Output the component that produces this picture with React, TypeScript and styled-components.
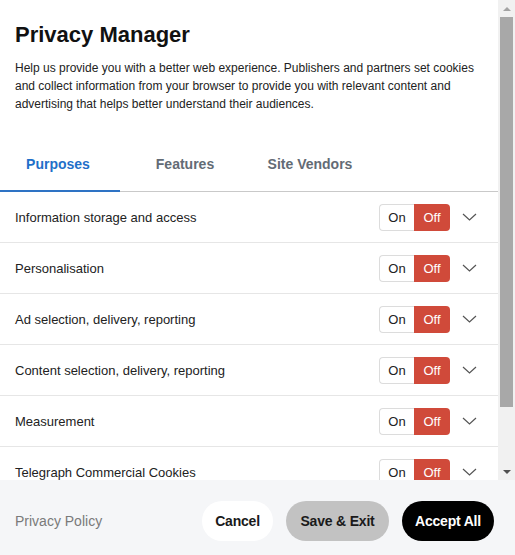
import React from "react";
import styled, { createGlobalStyle } from "styled-components";

const Global = createGlobalStyle`
  html, body { margin: 0; padding: 0; background: #fff; }
  body { font-family: "Liberation Sans", Arial, sans-serif; }
  * { box-sizing: border-box; }
`;

const Frame = styled.div`
  width: 515px;
  height: 555px;
  display: flex;
  flex-direction: column;
  overflow: hidden;
  background: #fff;
`;

const Body = styled.div`
  height: 480px;
  display: flex;
  flex-direction: row;
`;

const Content = styled.div`
  flex: 1;
  overflow: hidden;
`;

const Header = styled.div`
  padding: 22px 15px 0 15px;
`;

const Title = styled.h1`
  margin: 0;
  font-size: 22px;
  line-height: 26px;
  font-weight: 700;
  color: #111;
`;

const Intro = styled.p`
  margin: 11px 0 0 0;
  font-size: 12px;
  line-height: 18px;
  color: #222;
`;

const TabList = styled.div`
  margin-top: 28px;
  display: flex;
  gap: 5px;
  border-bottom: 1px solid #c9c9c9;
`;

const Tab = styled.div<{ $active?: boolean }>`
  width: 120px;
  text-align: center;
  padding: 15px 0 18px 0;
  font-size: 14px;
  line-height: 16px;
  font-weight: 700;
  color: ${(p) => (p.$active ? "#1f6fc9" : "#636b75")};
  border-bottom: 2px solid ${(p) => (p.$active ? "#2e73c4" : "transparent")};
  margin-bottom: -1px;
  padding-right: ${(p) => (p.$active ? "4px" : "0")};
`;

const Row = styled.div`
  height: 51px;
  display: flex;
  align-items: center;
  padding: 0 21px 0 15px;
  border-bottom: 1px solid #e6e6e6;
`;

const RowLabel = styled.div`
  flex: 1;
  font-size: 13px;
  color: #222;
`;

const Toggle = styled.div`
  display: flex;
  height: 27px;
  margin-right: 12px;
`;

const ToggleOn = styled.div`
  width: 35px;
  display: flex;
  align-items: center;
  justify-content: center;
  font-size: 13px;
  color: #222;
  background: #fff;
  border: 1px solid #dcdcdc;
  border-right: none;
  border-radius: 4px 0 0 4px;
`;

const ToggleOff = styled.div`
  width: 36px;
  display: flex;
  align-items: center;
  justify-content: center;
  font-size: 13px;
  color: #fff;
  background: #d04a3a;
  border-radius: 0 4px 4px 0;
`;

const Chevron = styled.svg`
  width: 15px;
  height: 8px;
  display: block;
`;

const Scrollbar = styled.div`
  width: 17px;
  display: flex;
  flex-direction: column;
  background: #f1f1f1;
`;

const ArrowBox = styled.div`
  height: 17px;
  display: flex;
  align-items: center;
  justify-content: center;
`;

const Triangle = styled.div<{ $down?: boolean; $color: string }>`
  width: 0;
  height: 0;
  border-left: 4px solid transparent;
  border-right: 4px solid transparent;
  ${(p) =>
    p.$down
      ? `border-top: 4px solid ${p.$color};`
      : `border-bottom: 4px solid ${p.$color};`}
`;

const Track = styled.div`
  flex: 1;
  padding: 0 2px;
`;

const Thumb = styled.div`
  height: 390px;
  background: #a8a8a8;
`;

const Footer = styled.div`
  flex: 1;
  background: #f5f6f8;
  display: flex;
  align-items: flex-start;
  padding: 21px 21px 0 15px;
`;

const PolicyLink = styled.div`
  flex: 1;
  font-size: 14px;
  line-height: 40px;
  color: #7a7a7a;
`;

const Buttons = styled.div`
  display: flex;
  gap: 13px;
`;

const Pill = styled.button<{ $variant: "light" | "grey" | "dark" }>`
  height: 40px;
  border: none;
  border-radius: 20px;
  padding: 0;
  font-family: "Liberation Sans", Arial, sans-serif;
  font-size: 14px;
  font-weight: 700;
  letter-spacing: -0.2px;
  background: ${(p) =>
    p.$variant === "light" ? "#fff" : p.$variant === "grey" ? "#c2c2c2" : "#000"};
  color: ${(p) => (p.$variant === "dark" ? "#fff" : "#1a1a1a")};
  width: ${(p) => (p.$variant === "light" ? "71px" : p.$variant === "grey" ? "103px" : "92px")};
`;

const purposes = [
  "Information storage and access",
  "Personalisation",
  "Ad selection, delivery, reporting",
  "Content selection, delivery, reporting",
  "Measurement",
  "Telegraph Commercial Cookies",
];

export default function App() {
  return (
    <Frame>
      <Global />
      <Body>
        <Content>
          <Header>
            <Title>Privacy Manager</Title>
            <Intro>
              Help us provide you with a better web experience. Publishers and partners set cookies
              and collect information from your browser to provide you with relevant content and
              advertising that helps better understand their audiences.
            </Intro>
          </Header>
          <TabList>
            <Tab $active>Purposes</Tab>
            <Tab>Features</Tab>
            <Tab>Site Vendors</Tab>
          </TabList>
          {purposes.map((p) => (
            <Row key={p}>
              <RowLabel>{p}</RowLabel>
              <Toggle>
                <ToggleOn>On</ToggleOn>
                <ToggleOff>Off</ToggleOff>
              </Toggle>
              <Chevron viewBox="0 0 15 8">
                <path d="M1 1 L7.5 7 L14 1" fill="none" stroke="#555" strokeWidth="1.2" />
              </Chevron>
            </Row>
          ))}
        </Content>
        <Scrollbar>
          <ArrowBox>
            <Triangle $color="#a3a3a3" />
          </ArrowBox>
          <Track>
            <Thumb />
          </Track>
          <ArrowBox>
            <Triangle $down $color="#505050" />
          </ArrowBox>
        </Scrollbar>
      </Body>
      <Footer>
        <PolicyLink>Privacy Policy</PolicyLink>
        <Buttons>
          <Pill $variant="light">Cancel</Pill>
          <Pill $variant="grey">Save &amp; Exit</Pill>
          <Pill $variant="dark">Accept All</Pill>
        </Buttons>
      </Footer>
    </Frame>
  );
}
